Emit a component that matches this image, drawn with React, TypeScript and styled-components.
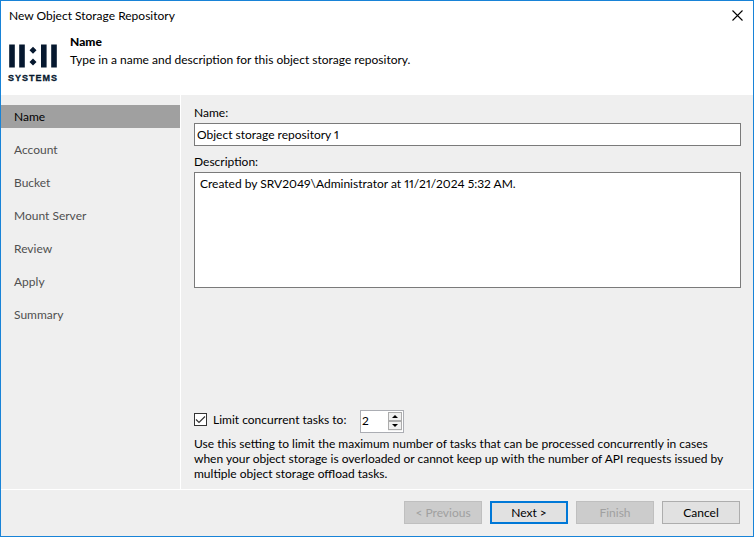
import React, { useState } from "react";
import styled, { createGlobalStyle } from "styled-components";

const GlobalStyle = createGlobalStyle`
  *, *::before, *::after { box-sizing: border-box; }
  body { margin: 0; }
  body, button, input, textarea {
    font-family: Lato, "Open Sans", sans-serif;
    font-size: 12px;
    font-variant-numeric: proportional-nums;
    line-height: 15px;
    color: #000;
  }
`;

const Dialog = styled.div`
  display: flex;
  flex-direction: column;
  min-height: 100vh;
  background: #efefef;
  border: 1px solid #1883d7;
`;

const TitleBar = styled.header`
  display: flex;
  align-items: center;
  justify-content: space-between;
  height: 28px;
  padding: 0 10px 0 8px;
  background: #fff;
`;

const Title = styled.h1`
  margin: 0;
  font-size: 12px;
  font-weight: 400;
`;

const CloseButton = styled.button`
  display: flex;
  padding: 0;
  border: 0;
  background: none;
`;

const Banner = styled.section`
  display: flex;
  gap: 9px;
  height: 66px;
  padding: 5px 6px;
  background: #fff;
`;

const LogoArt = styled.svg`
  display: block;
  margin-top: 9px;
  flex: none;
`;

const StepTitle = styled.h2`
  margin: 0 0 3px;
  font-size: 12px;
  font-weight: 900;
`;

const StepText = styled.p`
  margin: 0;
`;

const Body = styled.div`
  display: flex;
  flex: 1;
`;

const Sidebar = styled.nav`
  flex: none;
  width: 180px;
  padding-top: 10px;
  border-right: 1px solid #fff;
`;

const StepList = styled.ul`
  display: flex;
  flex-direction: column;
  gap: 10px;
  margin: 0;
  padding: 0;
  list-style: none;
`;

const StepLink = styled.a<{ $active: boolean }>`
  display: block;
  padding: 4px 13px;
  color: ${(p) => (p.$active ? "#000" : "#505050")};
  background: ${(p) => (p.$active ? "#a0a0a0" : "transparent")};
  text-decoration: none;
`;

const Main = styled.main`
  display: flex;
  flex-direction: column;
  flex: 1;
  min-width: 0;
  padding: 10px 12px 8px 13px;
`;

const FieldLabel = styled.label`
  display: block;
  margin-bottom: 3px;
`;

const TextInput = styled.input`
  height: 23px;
  margin-bottom: 8px;
  padding: 0 2px;
  border: 1px solid #7a7a7a;
  border-radius: 0;
  background: #fff;
`;

const TextArea = styled.textarea`
  height: 116px;
  padding: 3px 5px;
  border: 1px solid #7a7a7a;
  border-radius: 0;
  background: #fff;
  resize: none;
`;

const LimitRow = styled.div`
  display: flex;
  align-items: center;
  margin-top: auto;
  margin-bottom: 3px;
`;

const LimitLabel = styled.label`
  display: flex;
  align-items: center;
  gap: 6px;
  min-width: 166px;
  margin-bottom: 5px;
`;

const CheckFrame = styled.span`
  display: grid;
  width: 13px;
  height: 13px;
  > * { grid-area: 1 / 1; }
`;

const CheckInput = styled.input`
  appearance: none;
  width: 13px;
  height: 13px;
  margin: 0;
  border: 1px solid #333;
  background: #fff;
`;

const CheckMark = styled.svg`
  display: block;
  pointer-events: none;
`;

const Spinner = styled.div`
  display: flex;
  width: 44px;
  height: 23px;
  padding: 1px;
  border: 1px solid #abadb3;
  background: #fff;
`;

const SpinnerInput = styled.input`
  flex: 1;
  min-width: 0;
  height: 17px;
  padding: 0;
  border: 0;
  outline: 0;
  background: none;
`;

const SpinnerArrows = styled.div`
  display: flex;
  flex-direction: column;
  width: 14px;
  background: #f0f0f0;
`;

const ArrowButton = styled.button`
  display: flex;
  align-items: center;
  justify-content: center;
  height: 9px;
  padding: 0;
  border: 1px solid #acacac;
  background: #f0f0f0;
`;

const Hint = styled.p`
  margin: 0;
  padding-right: 12px;
`;

const Footer = styled.footer`
  display: flex;
  justify-content: flex-end;
  gap: 8px;
  padding: 11px 13px 12px;
  border-top: 1px solid #fff;
`;

const DialogButton = styled.button<{ $primary?: boolean }>`
  width: 78px;
  height: 23px;
  padding: 0;
  border: ${(p) => (p.$primary ? "2px solid #0078d7" : "1px solid #adadad")};
  border-radius: 0;
  background: #e1e1e1;
  &:disabled {
    border-color: #bfbfbf;
    background: #ccc;
    color: #a0a0a0;
  }
`;

const Logo = () => (
  <LogoArt width="54" height="40" viewBox="0 0 54 40" role="img" aria-label="11:11 Systems">
    <g fill="#06182f">
      <rect x="2.2" y="1.5" width="5.6" height="23" />
      <rect x="12.2" y="1.5" width="5.6" height="23" />
      <rect x="34" y="1.5" width="5.6" height="23" />
      <rect x="44.2" y="1.5" width="5.6" height="23" />
      <path d="M26 3.8 29.5 7.3 26 10.8 22.5 7.3ZM26 15.4 29.5 18.9 26 22.4 22.5 18.9Z" />
      <text
        x="1"
        y="38"
        fontFamily="'Liberation Sans', sans-serif"
        fontSize="9"
        fontWeight="700"
        letterSpacing="1"
        stroke="#06182f"
        strokeWidth="0.3"
      >
        SYSTEMS
      </text>
    </g>
  </LogoArt>
);

const steps = ["Name", "Account", "Bucket", "Mount Server", "Review", "Apply", "Summary"];

export default function App() {
  const [name, setName] = useState("Object storage repository 1");
  const [description, setDescription] = useState(
    "Created by SRV2049\\Administrator at 11/21/2024 5:32 AM."
  );
  const [limited, setLimited] = useState(true);
  const [tasks, setTasks] = useState(2);

  return (
    <>
      <GlobalStyle />
      <Dialog role="dialog" aria-labelledby="dialog-title">
        <TitleBar>
          <Title id="dialog-title">New Object Storage Repository</Title>
          <CloseButton type="button" aria-label="Close">
            <svg width="11" height="11" viewBox="0 0 11 11" stroke="#000" strokeWidth="1.1">
              <path d="M.5 .5 10.5 10.5M10.5 .5 .5 10.5" />
            </svg>
          </CloseButton>
        </TitleBar>
        <Banner>
          <Logo />
          <div>
            <StepTitle>Name</StepTitle>
            <StepText>Type in a name and description for this object storage repository.</StepText>
          </div>
        </Banner>
        <Body>
          <Sidebar aria-label="Wizard steps">
            <StepList>
              {steps.map((step, i) => (
                <li key={step}>
                  <StepLink
                    href={`#${step.toLowerCase().replace(" ", "-")}`}
                    $active={i === 0}
                    aria-current={i === 0 ? "step" : undefined}
                  >
                    {step}
                  </StepLink>
                </li>
              ))}
            </StepList>
          </Sidebar>
          <Main>
            <FieldLabel htmlFor="repo-name">Name:</FieldLabel>
            <TextInput id="repo-name" value={name} onChange={(e) => setName(e.target.value)} />
            <FieldLabel htmlFor="repo-description">Description:</FieldLabel>
            <TextArea
              id="repo-description"
              value={description}
              onChange={(e) => setDescription(e.target.value)}
            />
            <LimitRow>
              <LimitLabel>
                <CheckFrame>
                  <CheckInput
                    type="checkbox"
                    checked={limited}
                    onChange={(e) => setLimited(e.target.checked)}
                  />
                  {limited && (
                    <CheckMark width="13" height="13" viewBox="0 0 13 13" fill="none">
                      <path d="M2 6.5 5 9.5 11 3.5" stroke="#333" strokeWidth="1.2" />
                    </CheckMark>
                  )}
                </CheckFrame>
                Limit concurrent tasks to:
              </LimitLabel>
              <Spinner>
                <SpinnerInput
                  aria-label="Concurrent tasks"
                  inputMode="numeric"
                  value={tasks}
                  onChange={(e) => setTasks(Number(e.target.value) || 1)}
                />
                <SpinnerArrows>
                  <ArrowButton type="button" aria-label="Increase" onClick={() => setTasks(tasks + 1)}>
                    <svg width="6" height="3" viewBox="0 0 6 3">
                      <path d="M0 3 3 0 6 3Z" />
                    </svg>
                  </ArrowButton>
                  <ArrowButton
                    type="button"
                    aria-label="Decrease"
                    onClick={() => setTasks(Math.max(1, tasks - 1))}
                  >
                    <svg width="6" height="3" viewBox="0 0 6 3">
                      <path d="M0 0 3 3 6 0Z" />
                    </svg>
                  </ArrowButton>
                </SpinnerArrows>
              </Spinner>
            </LimitRow>
            <Hint>
              Use this setting to limit the maximum number of tasks that can be processed
              concurrently in cases when your object storage is overloaded or cannot keep up with
              the number of API requests issued by multiple object storage offload tasks.
            </Hint>
          </Main>
        </Body>
        <Footer>
          <DialogButton type="button" disabled>
            &lt; Previous
          </DialogButton>
          <DialogButton type="button" $primary>
            Next &gt;
          </DialogButton>
          <DialogButton type="button" disabled>
            Finish
          </DialogButton>
          <DialogButton type="button">Cancel</DialogButton>
        </Footer>
      </Dialog>
    </>
  );
}
